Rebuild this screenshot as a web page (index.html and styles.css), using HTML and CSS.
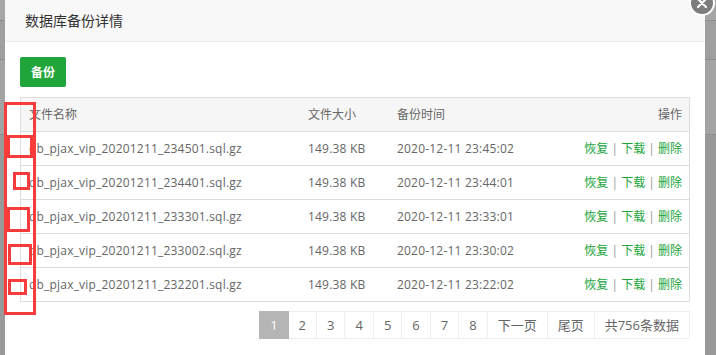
FILE: index.html
```html
<!DOCTYPE html>
<html lang="zh-CN">
<head>
<meta charset="utf-8">
<title>数据库备份详情</title>
<link rel="stylesheet" href="styles.css">
</head>
<body>
<div class="layer">
  <div class="layer-title">数据库备份详情</div>
  <div class="layer-content">
    <button class="btn-green">备份</button>
    <table class="tbl">
      <colgroup><col class="c1"><col class="c2"><col class="c3"><col class="c4"></colgroup>
      <thead>
        <tr><th>文件名称</th><th>文件大小</th><th>备份时间</th><th class="r">操作</th></tr>
      </thead>
      <tbody>
        <tr><td class="t">db_pjax_vip_20201211_234501.sql.gz</td><td class="t">149.38 KB</td><td class="t">2020-12-11 23:45:02</td><td class="r"><a>恢复</a> <span class="sep">|</span> <a>下载</a> <span class="sep">|</span> <a>删除</a></td></tr>
        <tr><td class="t">db_pjax_vip_20201211_234401.sql.gz</td><td class="t">149.38 KB</td><td class="t">2020-12-11 23:44:01</td><td class="r"><a>恢复</a> <span class="sep">|</span> <a>下载</a> <span class="sep">|</span> <a>删除</a></td></tr>
        <tr><td class="t">db_pjax_vip_20201211_233301.sql.gz</td><td class="t">149.38 KB</td><td class="t">2020-12-11 23:33:01</td><td class="r"><a>恢复</a> <span class="sep">|</span> <a>下载</a> <span class="sep">|</span> <a>删除</a></td></tr>
        <tr><td class="t">db_pjax_vip_20201211_233002.sql.gz</td><td class="t">149.38 KB</td><td class="t">2020-12-11 23:30:02</td><td class="r"><a>恢复</a> <span class="sep">|</span> <a>下载</a> <span class="sep">|</span> <a>删除</a></td></tr>
        <tr><td class="t">db_pjax_vip_20201211_232201.sql.gz</td><td class="t">149.38 KB</td><td class="t">2020-12-11 23:22:02</td><td class="r"><a>恢复</a> <span class="sep">|</span> <a>下载</a> <span class="sep">|</span> <a>删除</a></td></tr>
      </tbody>
    </table>
    <div class="pager">
      <span class="pg current">1</span><span class="pg">2</span><span class="pg">3</span><span class="pg">4</span><span class="pg">5</span><span class="pg">6</span><span class="pg">7</span><span class="pg">8</span><span class="pg">下一页</span><span class="pg">尾页</span><span class="pg">共756条数据</span>
    </div>
  </div>
</div>
<a class="close" aria-label="close">
  <svg width="26" height="26" viewBox="0 0 26 26"><circle cx="13" cy="13" r="12" fill="#7d7d7d" stroke="#fff" stroke-width="2"/><path d="M9 9 L17 17 M17 9 L9 17" stroke="#fff" stroke-width="2.2" stroke-linecap="round"/></svg>
</a>
<div class="mark m0"></div>
<div class="mark m1"></div>
<div class="mark m2"></div>
<div class="mark m3"></div>
<div class="mark m4"></div>
<div class="mark m5"></div>
</body>
</html>
```
FILE: styles.css
```css
html, body {
  margin: 0;
  padding: 0;
}
body {
  height: 355px;
  overflow: hidden;
  padding-left: 5px;
  font-family: "Open Sans", "Noto Sans CJK SC", sans-serif;
  background: linear-gradient(to bottom, #a6a6a6 0 20px, #8d8d8d 20px 21px, #9f9f9f 21px 59px, #8d8d8d 59px 60px, #a4a4a4 60px 134px, #909090 134px 135px, #999 135px);
  position: relative;
}
.layer {
  width: 700px;
  height: 420px;
  background: #fff;
}
.layer-title {
  height: 41px;
  line-height: 41px;
  padding-left: 20px;
  background: #f8f8f8;
  border-bottom: 1px solid #eee;
  font-size: 14px;
  color: #333;
}
.layer-content {
  padding: 15px 15px 0 15px;
}
.btn-green {
  display: block;
  height: 30px;
  padding: 0 11px;
  border: none;
  border-radius: 2px;
  background: #20a53a;
  color: #fff;
  font-family: "Open Sans", "Noto Sans CJK SC", sans-serif;
  font-size: 12px;
  font-weight: bold;
}
.tbl {
  margin-top: 10px;
  width: 670px;
  table-layout: fixed;
  border-collapse: separate;
  border-spacing: 0;
  border: 1px solid #ddd;
  border-bottom: none;
  font-size: 12px;
  color: #666;
}
.c1 { width: 279px; }
.c2 { width: 89px; }
.c3 { width: 150px; }
.c4 { width: 150px; }
.tbl th, .tbl td {
  line-height: 33px;
  padding: 0 8px;
  border-bottom: 1px solid #ddd;
  text-align: left;
  font-weight: normal;
  white-space: nowrap;
  overflow: hidden;
}
.tbl th {
  background: #f6f6f6;
}
.tbl .t {
  letter-spacing: 0.2px;
}
.tbl .r {
  text-align: right;
  padding-right: 7px;
}
.tbl a {
  color: #20a53a;
}
.tbl .sep {
  color: #999;
}
.pager {
  margin-top: 9px;
  display: flex;
  justify-content: flex-end;
}
.pg {
  display: block;
  height: 26px;
  line-height: 26px;
  padding: 0 10px;
  border: 1px solid #eee;
  margin-left: -1px;
  font-size: 13px;
  color: #666;
  background: #fff;
}
.pg.current {
  background: #b5b5b5;
  border-color: #b5b5b5;
  color: #fff;
  position: relative;
}
.close {
  position: absolute;
  left: 689px;
  top: -10px;
  width: 26px;
  height: 26px;
}
.close svg { display: block; }
.mark {
  position: absolute;
  box-sizing: border-box;
  border: 3px solid #f83c3c;
}
.m0 { left: 4px; top: 102px; width: 32px; height: 213px; }
.m1 { left: 7px; top: 135px; width: 26px; height: 23px; }
.m2 { left: 13px; top: 172px; width: 17px; height: 18px; }
.m3 { left: 7px; top: 207px; width: 23px; height: 25px; }
.m4 { left: 8px; top: 244px; width: 24px; height: 21px; }
.m5 { left: 8px; top: 279px; width: 19px; height: 16px; }
```
